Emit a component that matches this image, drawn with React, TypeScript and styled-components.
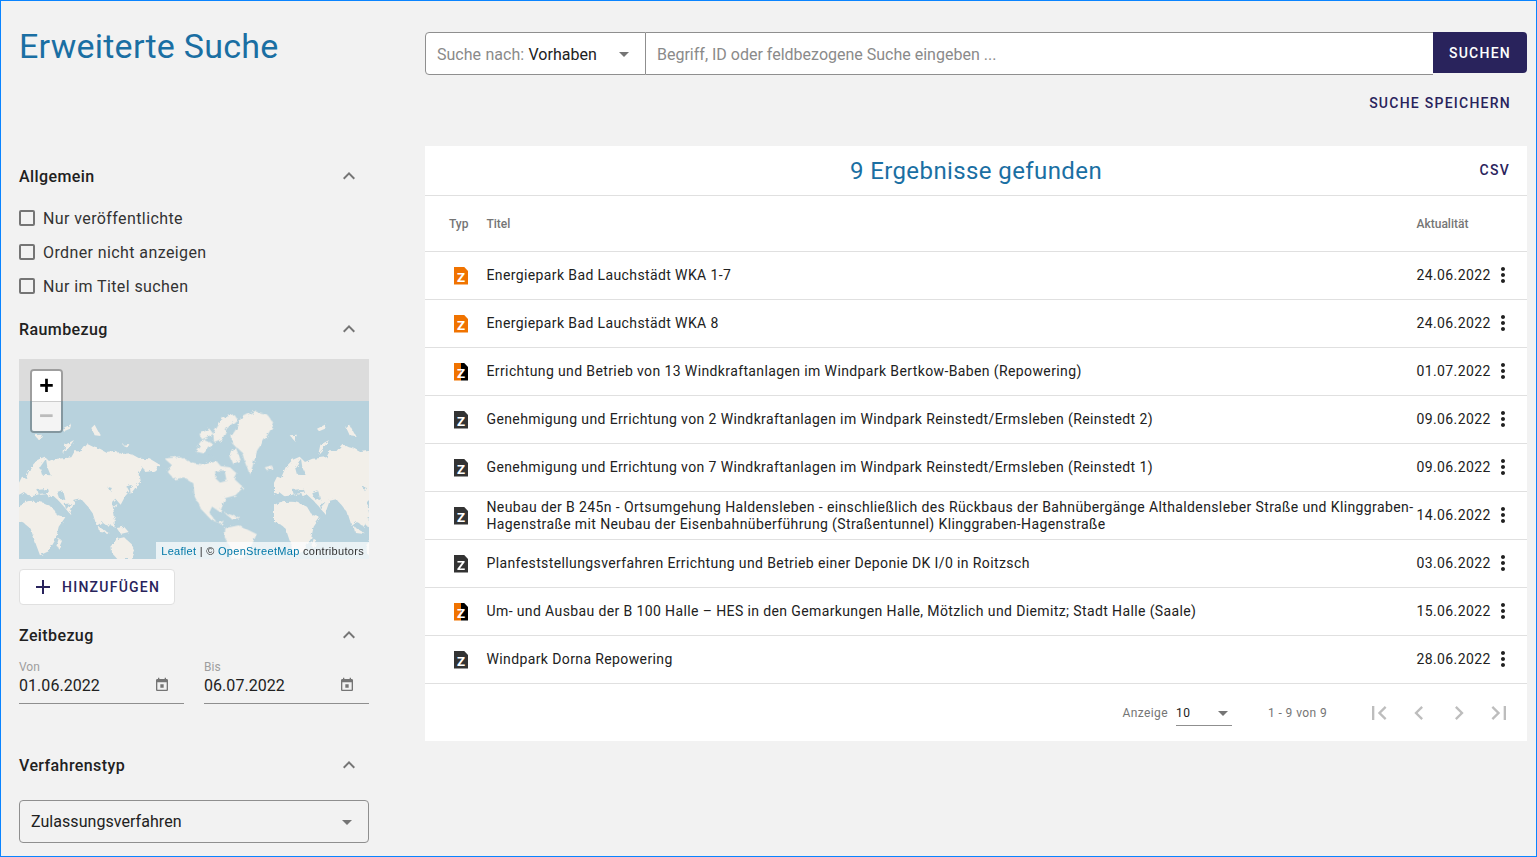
import React from 'react'
import styled, { createGlobalStyle } from 'styled-components'

const GlobalStyle = createGlobalStyle`
    html, body {
        margin: 0;
        padding: 0;
        overflow: hidden;
        background: #f2f2f2;
    }
    * {
        box-sizing: border-box;
    }
`

const NAVY = '#29235c'
const BLUE = '#1a6fa3'

const Page = styled.div`
    width: 1537px;
    height: 857px;
    border: 1px solid #0a84ff;
    background: #f2f2f2;
    padding: 0 9px 0 18px;
    display: grid;
    grid-template-columns: 350px 1102px;
    column-gap: 56px;
    overflow: hidden;
    font-family: Roboto, 'Liberation Sans', sans-serif;
    color: #212121;
`

const Sidebar = styled.aside`
    display: flex;
    flex-direction: column;
`

const PageTitle = styled.h1`
    margin: 25px 0 98px;
    font-size: 34px;
    line-height: 40px;
    font-weight: 400;
    letter-spacing: 0.25px;
    color: ${BLUE};
    white-space: nowrap;
`

const SectionHead = styled.div<{ $gapAfter: number; $gapBefore?: number }>`
    display: flex;
    align-items: center;
    justify-content: space-between;
    height: 24px;
    margin-top: ${(p) => p.$gapBefore ?? 0}px;
    margin-bottom: ${(p) => p.$gapAfter}px;
    padding-right: 8px;
`

const SectionTitle = styled.h2`
    margin: 0;
    padding-top: 2px;
    font-size: 16px;
    line-height: 24px;
    font-weight: 500;
    letter-spacing: 0.4px;
`

const CheckRow = styled.label`
    display: flex;
    align-items: center;
    gap: 8px;
    height: 34px;
    font-size: 16px;
    letter-spacing: 0.4px;
    color: #333;
`

const CheckBox = styled.span`
    width: 16px;
    height: 16px;
    border: 2px solid #757575;
    border-radius: 2px;
`

const MapFrame = styled.div`
    position: relative;
    height: 200px;
    overflow: hidden;
    background: #dcdcdc;
`

const MapSvg = styled.svg`
    display: block;
    width: 350px;
    height: 200px;
`

const ZoomControl = styled.div`
    position: absolute;
    top: 10px;
    left: 11px;
    width: 33px;
    border: 2px solid rgba(0, 0, 0, 0.28);
    border-radius: 4px;
    background-clip: padding-box;
    overflow: hidden;
`

const ZoomButton = styled.div<{ $disabled?: boolean }>`
    height: 30px;
    padding-top: 2px;
    display: flex;
    align-items: center;
    justify-content: center;
    background: ${(p) => (p.$disabled ? '#f4f4f4' : '#fff')};
    color: ${(p) => (p.$disabled ? '#bbb' : '#000')};
    font-family: 'Liberation Mono', monospace;
    font-size: 25px;
    font-weight: 700;
    & + & {
        border-top: 1px solid #ccc;
    }
`

const Attribution = styled.div`
    position: absolute;
    right: 0;
    bottom: 0;
    height: 17px;
    padding: 1px 5px 0;
    background: rgba(255, 255, 255, 0.7);
    font-family: 'Liberation Sans', sans-serif;
    font-size: 11px;
    line-height: 17px;
    letter-spacing: 0.3px;
    color: #333;
    white-space: nowrap;
`

const AttributionLink = styled.span`
    color: #0078a8;
`

const AddButton = styled.div`
    display: flex;
    align-items: center;
    gap: 7px;
    width: 156px;
    height: 36px;
    margin-top: 10px;
    padding-left: 11px;
    background: #fff;
    border: 1px solid #e0e0e0;
    border-radius: 4px;
    color: ${NAVY};
    font-size: 14px;
    font-weight: 500;
    letter-spacing: 1.25px;
`

const DateRow = styled.div`
    display: grid;
    grid-template-columns: 165px 165px;
    column-gap: 20px;
`

const DateField = styled.div`
    height: 44px;
    border-bottom: 1px solid #8f8f8f;
`

const DateLabel = styled.div`
    font-size: 12px;
    line-height: 14px;
    color: #9e9e9e;
`

const DateValue = styled.div`
    display: flex;
    align-items: center;
    justify-content: space-between;
    height: 24px;
    margin-top: -1px;
    padding-right: 14px;
    font-size: 16px;
    letter-spacing: 0.05px;
`

const SelectBox = styled.div`
    display: flex;
    align-items: center;
    justify-content: space-between;
    height: 43px;
    padding: 0 9px 0 11px;
    border: 1px solid #8f8f8f;
    border-radius: 4px;
    font-size: 16px;
    letter-spacing: 0.05px;
`

const Main = styled.main`
    display: flex;
    flex-direction: column;
`

const SearchBar = styled.div`
    display: flex;
    height: 43px;
    margin-top: 31px;
`

const SearchType = styled.div`
    display: flex;
    align-items: center;
    justify-content: space-between;
    width: 221px;
    padding: 0 9px 0 11px;
    background: #fff;
    border: 1px solid #8f8f8f;
    border-radius: 4px 0 0 4px;
    font-size: 16px;
`

const SearchTypeText = styled.span`
    padding-top: 2px;
    word-spacing: 0.5px;
`

const SearchTypeLabel = styled.span`
    color: #8a8a8a;
`

const SearchInput = styled.div`
    flex: 1;
    display: flex;
    align-items: center;
    padding: 2px 0 0 11px;
    background: #fff;
    border: 1px solid #8f8f8f;
    border-left: none;
    border-right: none;
    font-size: 16px;
    color: #8a8a8a;
`

const SearchButton = styled.div`
    display: flex;
    align-items: center;
    justify-content: center;
    width: 94px;
    height: 41px;
    background: ${NAVY};
    border-radius: 0 4px 4px 0;
    color: #fff;
    font-size: 14px;
    font-weight: 500;
    letter-spacing: 1.25px;
`

const TextAction = styled.div`
    color: ${NAVY};
    font-size: 14px;
    font-weight: 500;
    letter-spacing: 1.25px;
    white-space: nowrap;
`

const SaveRow = styled.div`
    display: flex;
    justify-content: flex-end;
    height: 71px;
    padding: 20px 16px 0 0;
`

const Card = styled.section`
    background: #fff;
`

const CardHead = styled.div`
    position: relative;
    display: flex;
    align-items: center;
    justify-content: center;
    height: 50px;
    border-bottom: 1px solid #e0e0e0;
`

const CardTitle = styled.h2`
    margin: 0;
    font-size: 24px;
    font-weight: 400;
    letter-spacing: 0.4px;
    color: ${BLUE};
`

const CsvAction = styled(TextAction)`
    position: absolute;
    right: 17px;
    top: 16px;
`

const TableRow = styled.div<{ $head?: boolean }>`
    display: grid;
    grid-template-columns: 61.5px 930px 74px 1fr;
    align-items: center;
    height: ${(p) => (p.$head ? 56 : 48)}px;
    border-bottom: 1px solid #e0e0e0;
    font-size: 14px;
    letter-spacing: 0.385px;
    color: #212121;
`

const HeadCell = styled.div<{ $first?: boolean }>`
    padding-left: ${(p) => (p.$first ? 24 : 0)}px;
    font-size: 12px;
    font-weight: 500;
    letter-spacing: 0;
    color: #757575;
    white-space: nowrap;
`

const TypeCell = styled.div`
    display: flex;
    padding-left: 29px;
`

const DOC_COLORS = {
    orange: ['#f07300', '#f07300'],
    mixed: ['#f07300', '#000'],
    dark: ['#333', '#333'],
}

type DocKind = keyof typeof DOC_COLORS

const DocIcon = styled.div<{ $kind: DocKind }>`
    display: flex;
    justify-content: center;
    width: 14px;
    height: 18px;
    padding-top: 1px;
    background: linear-gradient(
        to right,
        ${(p) => DOC_COLORS[p.$kind][0]} 50%,
        ${(p) => DOC_COLORS[p.$kind][1]} 50%
    );
    clip-path: polygon(0 0, 70% 0, 100% 25%, 100% 100%, 0 100%);
    color: #fff;
    font-size: 17px;
    font-weight: 500;
    line-height: 16px;
    letter-spacing: 0;
`

const TitleCell = styled.div`
    line-height: 17px;
`

const DateCell = styled.div`
    line-height: 17px;
    white-space: nowrap;
`

const MenuCell = styled.div`
    display: flex;
    align-items: center;
    margin-bottom: 2px;
`

const Pager = styled.div`
    display: flex;
    align-items: center;
    height: 57px;
    padding-left: 697.5px;
    font-size: 12px;
    letter-spacing: 0.4px;
    color: #757575;
`

const PageSize = styled.div`
    display: flex;
    align-items: center;
    justify-content: space-between;
    width: 56px;
    height: 25px;
    margin: 1px 36px 0 8px;
    border-bottom: 1px solid #8f8f8f;
    color: #212121;
`

const PageSizeArrow = styled.span`
    margin-right: -3px;
`

const PagerButtons = styled.div`
    display: flex;
    margin-left: 32px;
`

const PagerButton = styled.div`
    display: flex;
    align-items: center;
    justify-content: center;
    width: 40px;
`

const Icon = styled.svg<{ $size: number; $color: string }>`
    display: block;
    flex: none;
    width: ${(p) => p.$size}px;
    height: ${(p) => p.$size}px;
    fill: ${(p) => p.$color};
`

const ICONS = {
    less: 'M12 8l-6 6 1.41 1.41L12 10.83l4.59 4.58L18 14z',
    drop: 'M7 10l5 5 5-5z',
    plus: 'M19 13h-6v6h-2v-6H5v-2h6V5h2v6h6v2z',
    date: 'M19 3h-1V1h-2v2H8V1H6v2H5c-1.11 0-1.99.9-1.99 2L3 19c0 1.1.89 2 2 2h14c1.1 0 2-.9 2-2V5c0-1.1-.9-2-2-2zm0 16H5V8h14v11zM9.5 11h5v5h-5z',
    more: 'M12 8c1.1 0 2-.9 2-2s-.9-2-2-2-2 .9-2 2 .9 2 2 2zm0 2c-1.1 0-2 .9-2 2s.9 2 2 2 2-.9 2-2-.9-2-2-2zm0 6c-1.1 0-2 .9-2 2s.9 2 2 2 2-.9 2-2-.9-2-2-2z',
    first: 'M18.41 16.59L13.82 12l4.59-4.59L17 6l-6 6 6 6zM6 6h2v12H6z',
    prev: 'M15.41 7.41L14 6l-6 6 6 6 1.41-1.41L10.83 12z',
    next: 'M10 6L8.59 7.41 13.17 12l-4.58 4.59L10 18l6-6z',
    last: 'M5.59 7.41L10.18 12l-4.59 4.59L7 18l6-6-6-6zM16 6h2v12h-2z',
}

function MdIcon({ name, size = 24, color = '#757575' }: { name: keyof typeof ICONS; size?: number; color?: string }) {
    return (
        <Icon viewBox="0 0 24 24" $size={size} $color={color}>
            <path d={ICONS[name]} />
        </Icon>
    )
}

const LAND = '#f2efe9'
const WATER = '#b8d2dd'

function OldWorld() {
    return (
        <>
            {/* Eurasia */}
            <path d="M57 398L66 380 78 384 92 352 112 330 134 320 150 336 172 326 196 324 214 322 224 304 244 304 262 282 282 292 300 296 318 306 345 302 366 312 390 310 420 326 452 328 482 346 462 362 436 366 428 352 416 372 420 396 404 412 390 402 378 406 388 424 376 438 362 464 346 446 336 456 344 500 326 530 306 516 290 528 278 490 262 468 244 448 224 452 210 492 192 470 176 452 158 436 138 446 118 432 92 442 72 426 57 434Z" fill={LAND} />
            {/* Africa */}
            <path d="M57 464L92 450 130 458 156 470 170 494 196 502 176 530 168 566 146 604 120 616 106 578 92 536 72 520 57 516Z" fill={LAND} />
            {/* Australia and islands */}
            <path d="M334 584L352 566 372 562 392 580 404 606 396 627 352 627 336 610Z" fill={LAND} />
            <path d="M176 566L186 572 176 596 170 586Z" fill={LAND} />
            <path d="M350 534L372 530 386 546 362 552Z" fill={LAND} />
            <path d="M296 530L330 550 300 546Z" fill={LAND} />
            <path d="M330 510L344 506 344 530 332 526Z" fill={LAND} />
            <path d="M340 470L352 462 348 476Z" fill={LAND} />
            <path d="M390 412L398 404 410 408 392 432Z" fill={LAND} />
            {/* Seas */}
            <path d="M172 430L190 424 196 450 178 446Z" fill={WATER} />
            <path d="M112 420L146 416 150 428 116 432Z" fill={WATER} />
            <path d="M120 352L138 326 142 352 152 376 126 374Z" fill={WATER} />
            <path d="M78 440L142 432 150 454 88 456Z" fill={WATER} />
            <path d="M194 462L214 460 198 478Z" fill={WATER} />
            <path d="M322 410L336 414 330 424Z" fill={WATER} />
            {/* Arctic islands */}
            <path d="M274 234L284 224 302 258 284 256Z" fill={LAND} />
            <path d="M190 312L196 284 222 270 204 296Z" fill={LAND} />
            <path d="M186 236L214 222 210 236 192 244Z" fill={LAND} />
            <path d="M104 256L126 254 118 272Z" fill={LAND} />
            <path d="M366 284L388 282 384 292Z" fill={LAND} />
        </>
    )
}

function WorldMap() {
    return (
        <MapSvg viewBox="57 27 1050 600" aria-hidden>
            <defs>
                <filter id="coast" x="-5%" y="-5%" width="110%" height="110%">
                    <feTurbulence type="fractalNoise" baseFrequency="0.07" numOctaves="3" seed="4" />
                    <feDisplacementMap in="SourceGraphic" scale="13" />
                </filter>
            </defs>
            <rect x="57" y="27" width="1050" height="600" fill="#dcdcdc" />
            <rect x="57" y="153" width="1050" height="474" fill={WATER} />
            <g filter="url(#coast)">
                <OldWorld />
                <g transform="translate(765 0)">
                    <OldWorld />
                </g>
                {/* North America */}
                <path d="M494 326L540 320 576 338 612 344 640 322 662 348 690 352 712 372 704 388 730 412 706 436 676 444 660 486 636 470 628 488 652 520 672 512 664 524 632 508 604 478 584 440 580 400 552 382 522 388 500 362 516 346Z" fill={LAND} />
                <path d="M646 362L676 362 682 392 660 398 646 384Z" fill={WATER} />
                <path d="M630 312L650 330 620 338Z" fill={WATER} />
                {/* South America */}
                <path d="M676 534L716 526 770 552 748 600 726 627 694 627 690 590 674 562Z" fill={LAND} />
                {/* Greenland */}
                <path d="M694 258L716 226 722 204 762 184 800 192 822 222 798 262 772 300 750 374 736 340 726 306 700 284Z" fill={LAND} />
                {/* Canadian archipelago */}
                <path d="M586 304L612 268 640 282 610 310Z" fill={LAND} />
                <path d="M640 250L668 204 702 192 712 208 680 236 668 266 642 276Z" fill={LAND} />
                <path d="M598 252L628 236 640 252 606 268Z" fill={LAND} />
                <path d="M690 318L706 290 722 330 700 342Z" fill={LAND} />
                <path d="M794 352L816 346 816 358 800 360Z" fill={LAND} />
                <path d="M672 488L724 504 694 506Z" fill={LAND} />
            </g>
        </MapSvg>
    )
}

const RESULTS: { kind: DocKind; title: string; date: string }[] = [
    { kind: 'orange', title: 'Energiepark Bad Lauchstädt WKA 1-7', date: '24.06.2022' },
    { kind: 'orange', title: 'Energiepark Bad Lauchstädt WKA 8', date: '24.06.2022' },
    { kind: 'mixed', title: 'Errichtung und Betrieb von 13 Windkraftanlagen im Windpark Bertkow-Baben (Repowering)', date: '01.07.2022' },
    { kind: 'dark', title: 'Genehmigung und Errichtung von 2 Windkraftanlagen im Windpark Reinstedt/Ermsleben (Reinstedt 2)', date: '09.06.2022' },
    { kind: 'dark', title: 'Genehmigung und Errichtung von 7 Windkraftanlagen im Windpark Reinstedt/Ermsleben (Reinstedt 1)', date: '09.06.2022' },
    {
        kind: 'dark',
        title: 'Neubau der B 245n - Ortsumgehung Haldensleben - einschließlich des Rückbaus der Bahnübergänge Althaldensleber Straße und Klinggraben-Hagenstraße mit Neubau der Eisenbahnüberführung (Straßentunnel) Klinggraben-Hagenstraße',
        date: '14.06.2022',
    },
    { kind: 'dark', title: 'Planfeststellungsverfahren Errichtung und Betrieb einer Deponie DK I/0 in Roitzsch', date: '03.06.2022' },
    { kind: 'mixed', title: 'Um- und Ausbau der B 100 Halle – HES in den Gemarkungen Halle, Mötzlich und Diemitz; Stadt Halle (Saale)', date: '15.06.2022' },
    { kind: 'dark', title: 'Windpark Dorna Repowering', date: '28.06.2022' },
]

export default function App() {
    return (
        <>
            <GlobalStyle />
            <Page>
                <Sidebar>
                    <PageTitle>Erweiterte Suche</PageTitle>
                    <SectionHead $gapAfter={13}>
                        <SectionTitle>Allgemein</SectionTitle>
                        <MdIcon name="less" />
                    </SectionHead>
                    <CheckRow><CheckBox />Nur veröffentlichte</CheckRow>
                    <CheckRow><CheckBox />Ordner nicht anzeigen</CheckRow>
                    <CheckRow><CheckBox />Nur im Titel suchen</CheckRow>
                    <SectionHead $gapBefore={14} $gapAfter={18}>
                        <SectionTitle>Raumbezug</SectionTitle>
                        <MdIcon name="less" />
                    </SectionHead>
                    <MapFrame>
                        <WorldMap />
                        <ZoomControl>
                            <ZoomButton>+</ZoomButton>
                            <ZoomButton $disabled>−</ZoomButton>
                        </ZoomControl>
                        <Attribution>
                            <AttributionLink>Leaflet</AttributionLink> | © <AttributionLink>OpenStreetMap</AttributionLink> contributors
                        </Attribution>
                    </MapFrame>
                    <AddButton>
                        <MdIcon name="plus" color={NAVY} />
                        HINZUFÜGEN
                    </AddButton>
                    <SectionHead $gapBefore={18} $gapAfter={13}>
                        <SectionTitle>Zeitbezug</SectionTitle>
                        <MdIcon name="less" />
                    </SectionHead>
                    <DateRow>
                        <DateField>
                            <DateLabel>Von</DateLabel>
                            <DateValue>01.06.2022<MdIcon name="date" size={16} /></DateValue>
                        </DateField>
                        <DateField>
                            <DateLabel>Bis</DateLabel>
                            <DateValue>06.07.2022<MdIcon name="date" size={16} /></DateValue>
                        </DateField>
                    </DateRow>
                    <SectionHead $gapBefore={49} $gapAfter={23}>
                        <SectionTitle>Verfahrenstyp</SectionTitle>
                        <MdIcon name="less" />
                    </SectionHead>
                    <SelectBox>
                        Zulassungsverfahren
                        <MdIcon name="drop" />
                    </SelectBox>
                </Sidebar>
                <Main>
                    <SearchBar>
                        <SearchType>
                            <SearchTypeText><SearchTypeLabel>Suche nach:</SearchTypeLabel> Vorhaben</SearchTypeText>
                            <MdIcon name="drop" />
                        </SearchType>
                        <SearchInput>Begriff, ID oder feldbezogene Suche eingeben ...</SearchInput>
                        <SearchButton>SUCHEN</SearchButton>
                    </SearchBar>
                    <SaveRow>
                        <TextAction>SUCHE SPEICHERN</TextAction>
                    </SaveRow>
                    <Card>
                        <CardHead>
                            <CardTitle>9 Ergebnisse gefunden</CardTitle>
                            <CsvAction>CSV</CsvAction>
                        </CardHead>
                        <TableRow $head>
                            <HeadCell $first>Typ</HeadCell>
                            <HeadCell>Titel</HeadCell>
                            <HeadCell>Aktualität</HeadCell>
                        </TableRow>
                        {RESULTS.map((r) => (
                            <TableRow key={r.title}>
                                <TypeCell><DocIcon $kind={r.kind}>z</DocIcon></TypeCell>
                                <TitleCell>{r.title}</TitleCell>
                                <DateCell>{r.date}</DateCell>
                                <MenuCell><MdIcon name="more" color="#212121" /></MenuCell>
                            </TableRow>
                        ))}
                        <Pager>
                            Anzeige
                            <PageSize>
                                10
                                <PageSizeArrow><MdIcon name="drop" /></PageSizeArrow>
                            </PageSize>
                            1 - 9 von 9
                            <PagerButtons>
                                <PagerButton><MdIcon name="first" size={28} color="rgba(0,0,0,0.26)" /></PagerButton>
                                <PagerButton><MdIcon name="prev" size={28} color="rgba(0,0,0,0.26)" /></PagerButton>
                                <PagerButton><MdIcon name="next" size={28} color="rgba(0,0,0,0.26)" /></PagerButton>
                                <PagerButton><MdIcon name="last" size={28} color="rgba(0,0,0,0.26)" /></PagerButton>
                            </PagerButtons>
                        </Pager>
                    </Card>
                </Main>
            </Page>
        </>
    )
}
